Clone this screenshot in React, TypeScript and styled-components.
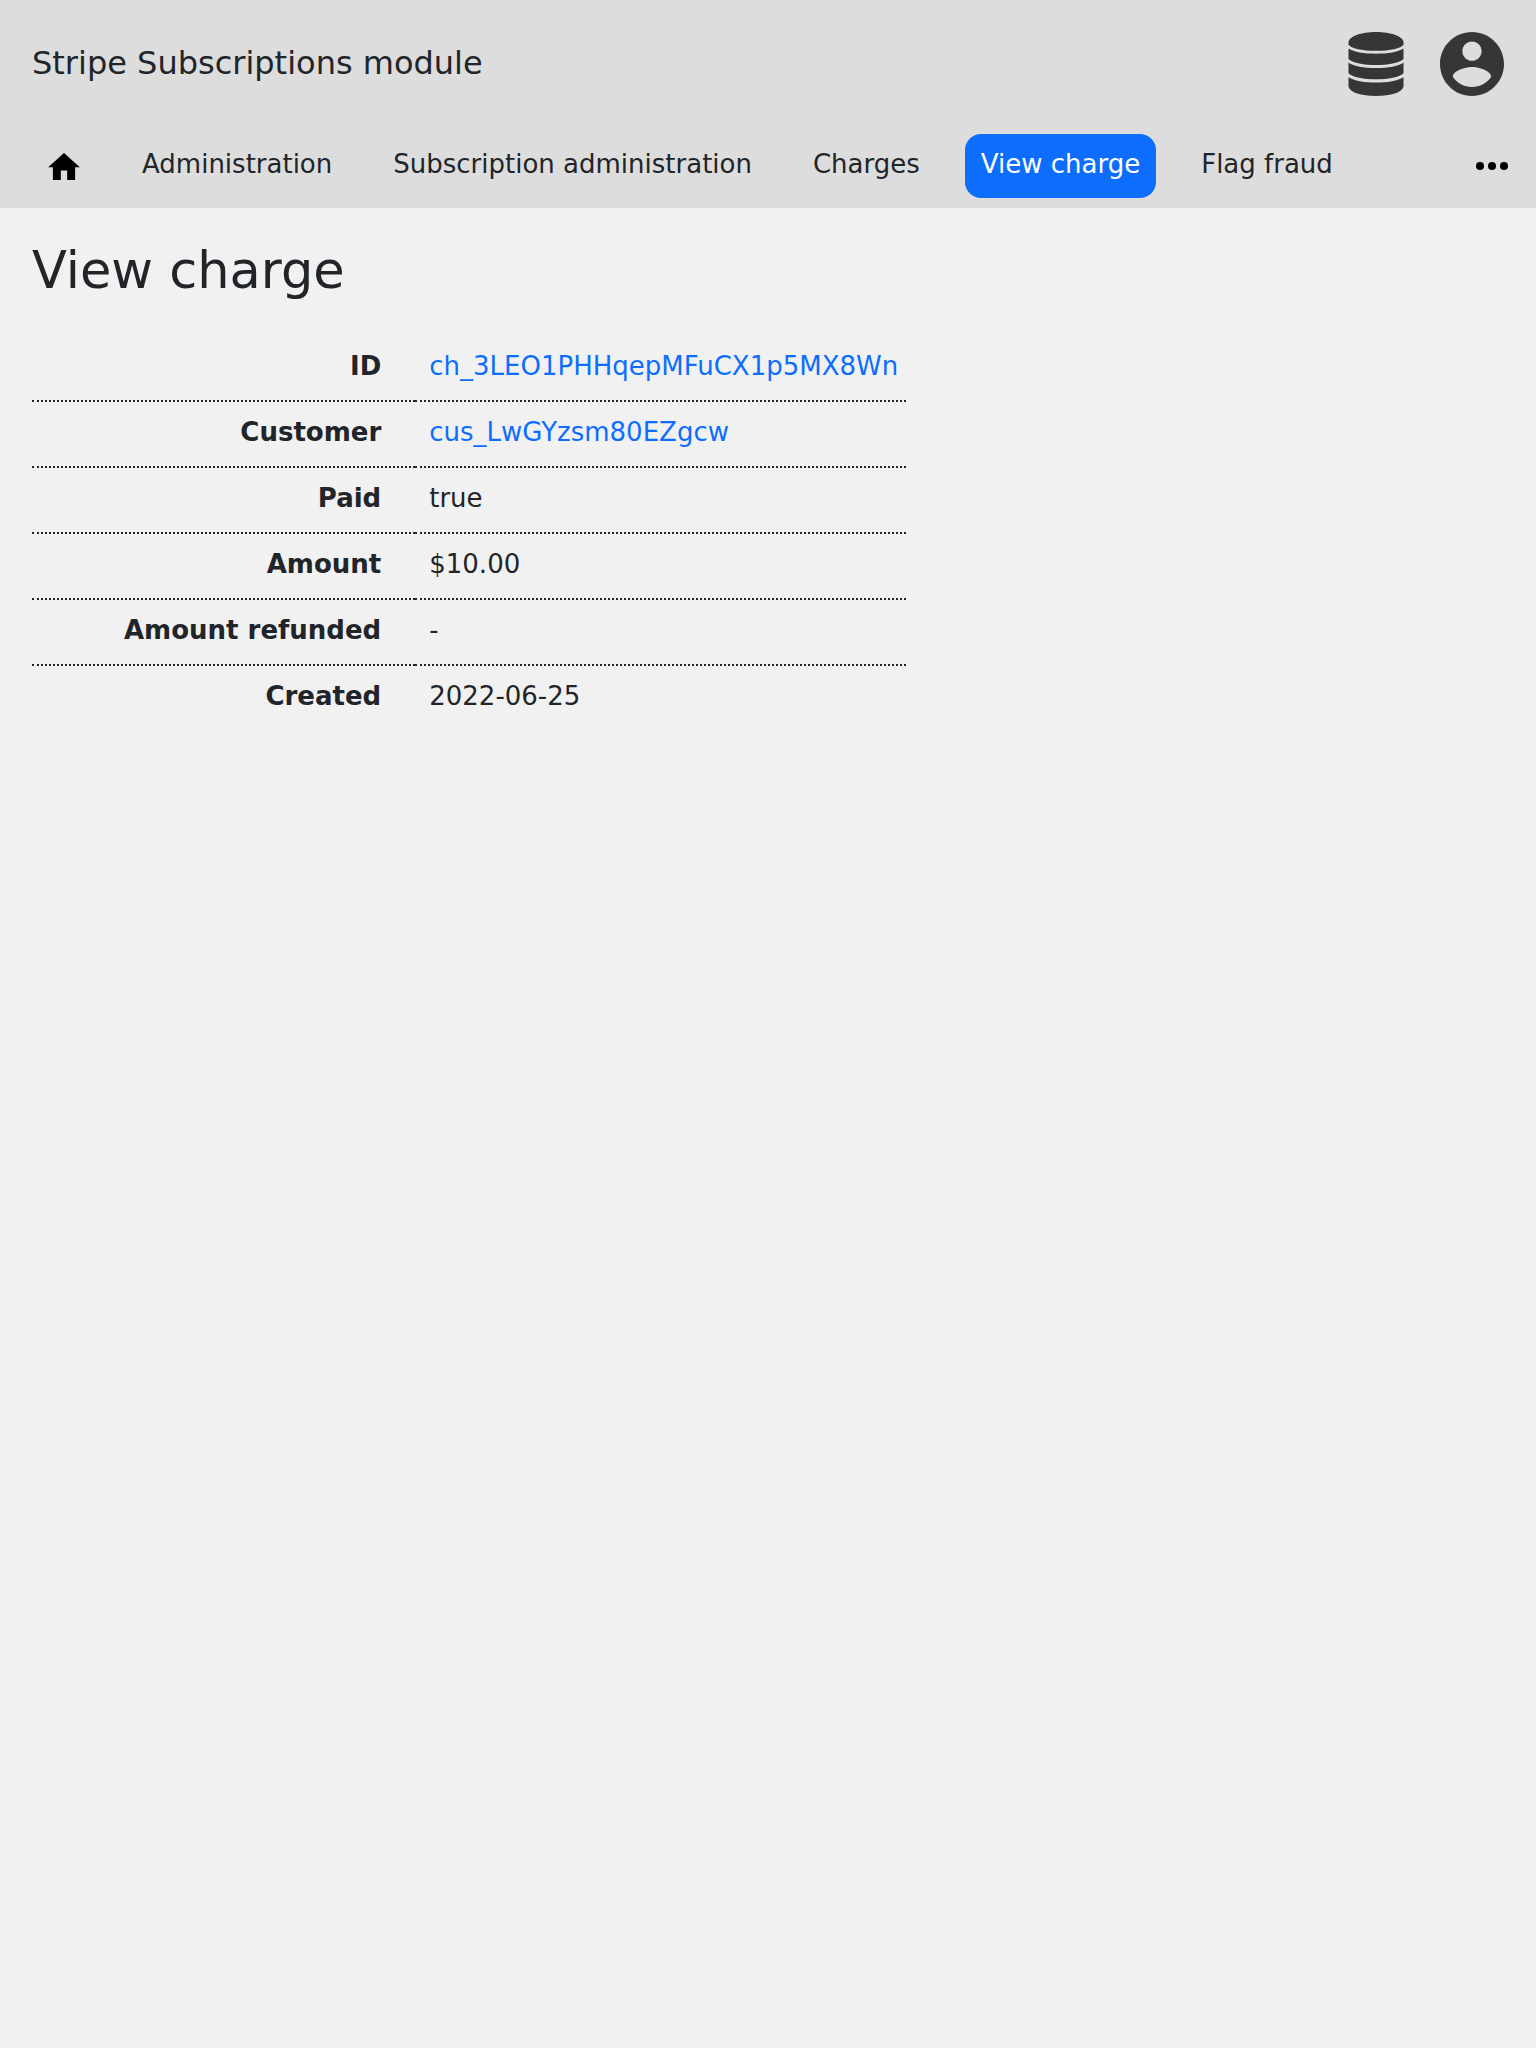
import React from 'react';
import styled, { createGlobalStyle } from 'styled-components';

const GlobalStyle = createGlobalStyle`
  *, *::before, *::after { box-sizing: border-box; }
  body {
    margin: 0;
    background: #f1f1f1;
    color: #212529;
    font-family: "DejaVu Sans", sans-serif;
    font-size: 26px;
    line-height: 42px;
  }
`;

const Header = styled.header`
  background: #ddd;
  padding-bottom: 10px;
`;

const TitleBar = styled.div`
  display: flex;
  justify-content: space-between;
  align-items: flex-start;
  padding: 32px 32px 38px;
`;

const ModuleTitle = styled.div`
  font-size: 32px;
  line-height: 62px;
`;

const Actions = styled.div`
  display: flex;
  gap: 36px;
`;

const IconButton = styled.button`
  display: flex;
  padding: 0;
  border: 0;
  background: none;
  color: #363636;
  cursor: pointer;
`;

const Nav = styled.nav`
  display: flex;
  align-items: center;
  gap: 29px;
  padding: 0 28px 0 32px;
`;

const NavLink = styled.a<{ $active?: boolean }>`
  padding: 9px 16px 13px;
  border-radius: 16px;
  color: ${(p) => (p.$active ? '#fff' : 'inherit')};
  background: ${(p) => (p.$active ? '#0d6efd' : 'transparent')};
  text-decoration: none;
  white-space: nowrap;
`;

const HomeLink = styled.a`
  display: flex;
  padding: 16px 17px 16px 16px;
  color: #000;
`;

const MoreButton = styled(IconButton)`
  margin-left: auto;
  color: #000;
`;

const Main = styled.main`
  padding: 32px;
`;

const Heading = styled.h1`
  margin: 0 0 34px;
  font-size: 51px;
  font-weight: 400;
  line-height: 62px;
`;

const Details = styled.table`
  border-collapse: collapse;

  tr + tr > * {
    border-top: 2px dotted #212529;
  }
`;

const Label = styled.th`
  padding: 9px 34px 13px 92px;
  font-weight: 700;
  text-align: right;
`;

const Value = styled.td`
  padding: 9px 8px 13px 14px;
`;

const ValueLink = styled.a`
  color: #0d6efd;
  text-decoration: none;
`;

const DatabaseIcon = () => (
  <svg width="56" height="64" viewBox="0 0 56 64" fill="currentColor" aria-hidden="true">
    <path d="M28 0C43 0 55.500 4.500 55.500 10.500V12.500C53 16.500 42 18.800 28 18.800S3 16.500.5 12.500V10.500C.5 4.500 13 0 28 0z" />
    <path d="M.5 16.500C6 20 16 21.700 28 21.700S50 20 55.500 16.500V27C51 31 40 33 28 33S5 31 .5 27z" />
    <path d="M.5 30.700C6 34.300 16 36 28 36S50 34.300 55.500 30.700V41.300C51 45.300 40 47.300 28 47.300S5 45.300 .5 41.300z" />
    <path d="M.5 45.200C6 48.800 16 50.600 28 50.600S50 48.800 55.500 45.200V54.500C54 60.500 43 64 28 64S2 60.500 .5 54.500z" />
  </svg>
);

const AccountIcon = () => (
  <svg width="64" height="64" viewBox="2 2 20 20" fill="currentColor" aria-hidden="true">
    <path d="M12 2C6.480 2 2 6.480 2 12s4.480 10 10 10 10-4.480 10-10S17.520 2 12 2zm0 3c1.660 0 3 1.340 3 3s-1.340 3-3 3-3-1.340-3-3 1.340-3 3-3zm0 14.200c-2.500 0-4.710-1.280-6-3.220.03-1.990 4-3.080 6-3.080 1.990 0 5.970 1.090 6 3.080-1.290 1.940-3.500 3.220-6 3.220z" />
  </svg>
);

const HomeIcon = () => (
  <svg width="32" height="27" viewBox="2 3 20 17" fill="currentColor" aria-hidden="true">
    <path d="M10 20v-6h4v6h5v-8h3L12 3 2 12h3v8z" />
  </svg>
);

const MoreIcon = () => (
  <svg width="32" height="8" viewBox="0 0 32 8" fill="currentColor" aria-hidden="true">
    <circle cx="4" cy="4" r="4" />
    <circle cx="16" cy="4" r="4" />
    <circle cx="28" cy="4" r="4" />
  </svg>
);

const links = ['Administration', 'Subscription administration', 'Charges', 'View charge', 'Flag fraud'];

const rows: { label: string; value: string; link?: boolean }[] = [
  { label: 'ID', value: 'ch_3LEO1PHHqepMFuCX1p5MX8Wn', link: true },
  { label: 'Customer', value: 'cus_LwGYzsm80EZgcw', link: true },
  { label: 'Paid', value: 'true' },
  { label: 'Amount', value: '$10.00' },
  { label: 'Amount refunded', value: '-' },
  { label: 'Created', value: '2022-06-25' },
];

export default function App() {
  return (
    <>
      <GlobalStyle />
      <Header>
        <TitleBar>
          <ModuleTitle>Stripe Subscriptions module</ModuleTitle>
          <Actions>
            <IconButton type="button" aria-label="Administrator menu"><DatabaseIcon /></IconButton>
            <IconButton type="button" aria-label="Account menu"><AccountIcon /></IconButton>
          </Actions>
        </TitleBar>
        <Nav>
          <HomeLink href="#" aria-label="Home"><HomeIcon /></HomeLink>
          {links.map((link) => (
            <NavLink key={link} href="#" $active={link === 'View charge'}>{link}</NavLink>
          ))}
          <MoreButton type="button" aria-label="More"><MoreIcon /></MoreButton>
        </Nav>
      </Header>
      <Main>
        <Heading>View charge</Heading>
        <Details>
          <tbody>
            {rows.map((row) => (
              <tr key={row.label}>
                <Label scope="row">{row.label}</Label>
                <Value>{row.link ? <ValueLink href="#">{row.value}</ValueLink> : row.value}</Value>
              </tr>
            ))}
          </tbody>
        </Details>
      </Main>
    </>
  );
}
